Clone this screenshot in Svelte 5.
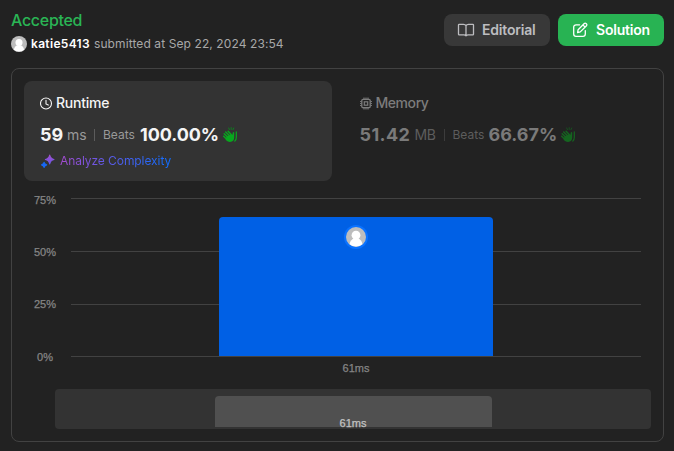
<script>
  const stats = [
    { name: 'Runtime', icon: 'clock', value: '59', unit: 'ms', beats: '100.00%', active: true },
    { name: 'Memory', icon: 'chip', value: '51.42', unit: 'MB', beats: '66.67%', active: false }
  ];
  const ticks = [
    { label: '75%', x: 21, y: 17.5, text: 23 },
    { label: '50%', x: 21, y: 70.5, text: 75 },
    { label: '25%', x: 21, y: 123.5, text: 127 },
    { label: '0%', x: 21, y: 175.5, text: 180 }
  ];
</script>

{#snippet person()}
  <circle cx="10" cy="10" r="10" fill="#bdbdbd" />
  <circle cx="10" cy="8.2" r="4.4" fill="#fff" />
  <path d="M3.6 17.2C4 13.8 6.4 12 8 11.6h4c1.600.4 4 2.200 4.400 5.600A10 10 0 0 1 3.600 17.200Z" fill="#fff" />
{/snippet}

<main>
  <header>
    <div class="result">
      <div class="status">Accepted</div>
      <div class="byline">
        <svg class="avatar" viewBox="0 0 20 20">{@render person()}</svg>
        <span class="user">katie5413</span>
        <span class="when">submitted at Sep 22, 2024 23:54</span>
      </div>
    </div>
    <div class="actions">
      <button class="editorial">
        <svg width="18" height="16" viewBox="0 0 18 16" fill="none" stroke="#bdbdc0" stroke-width="1.3" stroke-linejoin="round" stroke-linecap="round">
          <path d="M9 3.600C8.500 2.700 7.600 2.300 6.500 2.300H2.200a.7.7 0 0 0-.7.7v9.200c0 .4.300.7.700.7h4.600c1 0 1.700.3 2.200.9.500-.6 1.200-.9 2.200-.9h4.600c.4 0 .7-.3.7-.7V3a.7.7 0 0 0-.7-.7h-4.300c-1.100 0-2 .4-2.500 1.300ZM9 3.600v10" />
        </svg>
        <span>Editorial</span>
      </button>
      <button class="solution">
        <svg width="16" height="16" viewBox="0 0 16 16" fill="none" stroke="#fff" stroke-width="1.3" stroke-linejoin="round" stroke-linecap="round">
          <path d="M7.600 2.800H4A2.300 2.300 0 0 0 1.700 5.100V12A2.300 2.300 0 0 0 4 14.300h7A2.300 2.300 0 0 0 13.300 12V8.600" />
          <path d="M5.600 10.500l.5-2.800 6.200-6.200a1.200 1.200 0 0 1 1.700 0l.5.5a1.200 1.200 0 0 1 0 1.700l-6.200 6.200ZM11 3l2.100 2.100" />
        </svg>
        <span>Solution</span>
      </button>
    </div>
  </header>

  <section class="card">
    <div class="tiles">
      {#each stats as s}
        <div class={['tile', s.icon, s.active ? 'active' : 'dim']}>
          <div class="title">
            {#if s.icon === 'clock'}
              <svg width="13" height="13" viewBox="0 0 13 13" fill="none" stroke="currentColor" stroke-width="1.1" stroke-linecap="round">
                <circle cx="6" cy="6.500" r="5.500" /><path d="M6 3.300v3.600l2.300 1.200" />
              </svg>
            {:else}
              <svg width="13" height="13" viewBox="0 0 13 13" fill="none" stroke="currentColor">
                <rect x="1.800" y="2.300" width="8.400" height="8.400" rx="1.300" stroke-width="1.300" />
                <rect x="4.300" y="4.800" width="3.400" height="3.400" stroke-width="1.200" />
                <path d="M4 2V.6M6 2V.6M8 2V.6M4 12.400V11M6 12.400V11M8 12.400V11M1.500 4.500H.1M1.500 6.500H.1M1.500 8.500H.1M11.900 4.500H10.500M11.900 6.500H10.500M11.900 8.500H10.500" stroke-width="1.100" />
              </svg>
            {/if}
            <span>{s.name}</span>
          </div>
          <div class="numbers">
            <span class="value">{s.value}</span>
            <span class="unit">{s.unit}</span>
            <i class="rule"></i>
            <span class="beats">Beats</span>
            <span class="pct">{s.beats}</span>
            <svg class="clap" width="16" height="16" viewBox="0 0 16 16" stroke-linecap="round" fill="none">
              <path d="M2.200 6.800 6.300 10.800M1.700 9.300l3.800 3.600M3.700 5 8 9.200M6.100 4.300l4 4.300" stroke="#08a81e" stroke-width="1.400" />
              <path d="M4.800 9.300 8.400 7.600l2 .5.4-2.600c.2-.9 1.400-.8 1.400.3v4.800c0 2.700-1.500 4.400-4.100 4.400-2 0-3.400-1-4.600-2.700Z" fill="#08a81e" />
              <path d="M14.300 4.800v5.400c0 1.600-.4 2.900-1.500 4" stroke="#08a81e" stroke-width="1.200" />
              <path d="M6.700 1l.7 1.600M9.200.7v1.700M11.700 1l-.7 1.600" stroke="#088a1c" stroke-width=".9" />
            </svg>
          </div>
          {#if s.active}
            <div class="analyze">
              <svg width="15" height="15" viewBox="0 0 15 15">
                <defs>
                  <linearGradient id="spark" x1="0" y1="0" x2="0" y2="1"><stop offset="0" stop-color="#a34fd0" /><stop offset="1" stop-color="#6b58e8" /></linearGradient>
                </defs>
                <path d="M8.700 1.100Q9.500 4.700 13 5.500 9.500 6.300 8.700 9.900 7.900 6.300 4.400 5.500 7.900 4.700 8.700 1.100Z" fill="url(#spark)" stroke="url(#spark)" stroke-width="1.100" stroke-linejoin="round" />
                <path d="M3.100 8.400Q3.700 10.300 5.600 10.900 3.700 11.500 3.100 13.400 2.500 11.500 .6 10.900 2.500 10.300 3.100 8.400Z" fill="#1869f5" stroke="#1869f5" stroke-width="1.200" stroke-linejoin="round" />
              </svg>
              <span>Analyze Complexity</span>
            </div>
          {/if}
        </div>
      {/each}
    </div>

    <svg class="chart" width="628" height="208" viewBox="0 0 628 208">
      {#each ticks as t}
        <text x={t.x} y={t.text}>{t.label}</text>
        <path d="M47 {t.y}H617" stroke="#424242" />
      {/each}
      <path d="M195 175V40a4 4 0 0 1 4-4H465a4 4 0 0 1 4 4V175Z" fill="#0060e5" />
      <circle cx="332" cy="56" r="12" fill="#0a72ff" />
      <g transform="translate(322 46)">{@render person()}</g>
      <text x="332" y="191">61ms</text>
    </svg>
    <div class="brush">
      <div class="mini"><span>61ms</span></div>
    </div>
  </section>
</main>

<style>
  :global(body) { background: #222; }
  main {
    box-sizing: border-box; width: 674px; height: 451px; padding: 10px 10px 9px 11px;
    background: #222; font-family: Inter, "Liberation Sans", sans-serif; color: #f5f5f5;
    display: flex; flex-direction: column; overflow: hidden; white-space: nowrap;
  }
  svg { display: block; flex: none; }
  header { display: flex; justify-content: space-between; height: 58px; flex: none; }
  .status { color: #2ab555; font-size: 16px; line-height: 20px; font-weight: 500; letter-spacing: -.3px; }
  .byline { display: flex; align-items: center; height: 16px; margin-top: 6px; font-size: 12px; line-height: 14px; }
  .byline span { padding-bottom: 1px; }
  .avatar { width: 16px; height: 16px; margin-right: 4px; }
  .user { font-weight: 600; color: #fff; margin-right: 4px; letter-spacing: .32px; }
  .when { color: #a8a8a8; letter-spacing: .1px; }
  .actions { display: flex; gap: 8px; padding-top: 4px; }
  button {
    box-sizing: border-box; width: 106px; height: 32px; border: 0; border-radius: 8px; padding: 0 0 0 13px;
    display: flex; align-items: center; font: 600 14px/18px Inter, sans-serif;
  }
  button span { padding-bottom: 1px; }
  .editorial { background: #383838; color: #bdbdc0; gap: 7px; letter-spacing: -.2px; }
  .solution { background: #28b353; color: #fff; gap: 8px; padding-left: 14px; letter-spacing: -.22px; }
  .card {
    box-sizing: border-box; width: 653px; height: 374px; border: 1px solid #424242; border-radius: 8px;
    padding: 12px; display: flex; flex-direction: column;
  }
  .tiles { display: flex; gap: 12px; }
  .tile { box-sizing: border-box; width: 308px; height: 100px; border-radius: 8px; padding: 14px 16px 0; }
  .active { background: #333; }
  .title { display: flex; align-items: center; height: 16px; gap: 3px; font-size: 14px; line-height: 17px; font-weight: 500; letter-spacing: -.24px; }
  .dim .title { letter-spacing: -.44px; }
  .title span { padding-bottom: 1px; }
  .numbers { display: flex; align-items: center; height: 22px; margin-top: 13px; }
  .numbers span { line-height: 22px; padding-bottom: 1px; }
  .value, .pct { font-size: 18px; font-weight: 700; }
  .value { letter-spacing: -.1px; min-width: 23px; }
  .chip .value { width: 50px; letter-spacing: .4px; }
  .pct { width: 78px; letter-spacing: -.08px; }
  .chip .pct { width: 68px; letter-spacing: 0; }
  .unit { font-size: 14px; color: #999; margin-left: 4px; width: 19px; letter-spacing: -.1px; }
  .chip .unit { width: 21px; margin-left: 5px; letter-spacing: -.4px; }
  .rule { width: 1px; height: 12px; background: #5c5c5c; margin: 0 8px; }
  .beats { font-size: 12px; color: #999; width: 32px; margin-right: 5px; }
  .chip .beats { margin-right: 4px; }
  .clap { margin-left: 4px; }
  .dim .title { color: #7c7c7c; }
  .dim .value, .dim .pct { color: #7a7a7a; }
  .dim .unit, .dim .beats { color: #5d5d5d; }
  .dim .rule { background: #3c3c3c; }
  .dim .clap { opacity: .5; margin-left: 3px; }
  .analyze { display: flex; align-items: center; height: 16px; margin-top: 7px; gap: 4px; padding-left: 1px; font-size: 12px; line-height: 15px; }
  .analyze span { padding-bottom: 1px; letter-spacing: -.07px; background: linear-gradient(90deg, #a54bcf, #5a5be8 45%, #0f6eff); background-clip: text; color: transparent; }
  .chart text { font: 11px "Liberation Sans", Arial, sans-serif; fill: #858585; stroke: #858585; stroke-width: .25px; text-anchor: middle; }
  .brush { display: flex; box-sizing: border-box; width: 596px; height: 40px; margin-left: 31px; border-radius: 4px; background: #333; padding: 7px 0 2px 160px; }
  .mini { width: 277px; height: 31px; border-radius: 4px 4px 0 0; background: #505050; text-align: center; }
  .mini span { display: block; padding-top: 21px; margin-left: -1px; font: 11px/13px "Liberation Sans", Arial, sans-serif; color: #c2c2c2; -webkit-text-stroke: .25px #c2c2c2; }
</style>
